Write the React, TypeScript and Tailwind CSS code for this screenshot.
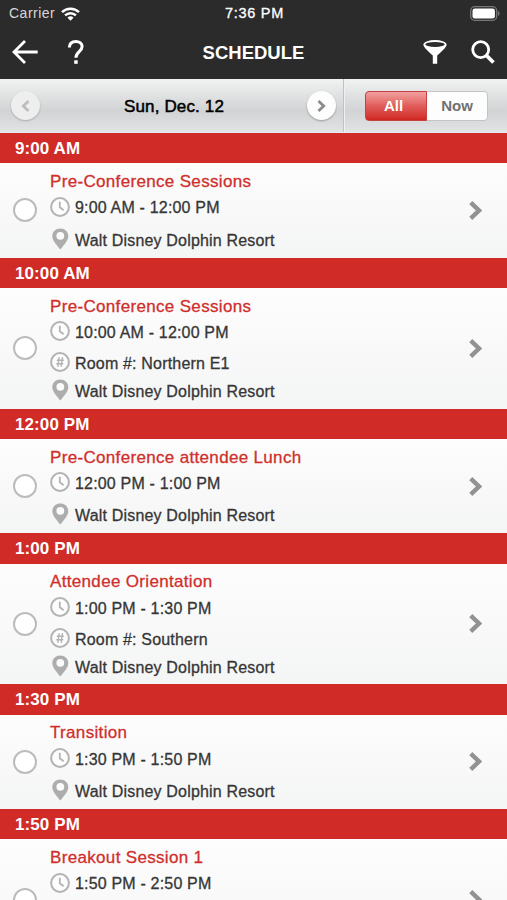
import { useState } from 'react'
import clsx from 'clsx'

type Session = {
  slot: string
  title: string
  time: string
  room?: string
  location?: string
  tall?: boolean
}

const VENUE = 'Walt Disney Dolphin Resort'

const sessions: Session[] = [
  { slot: '9:00 AM', title: 'Pre-Conference Sessions', time: '9:00 AM - 12:00 PM', location: VENUE },
  { slot: '10:00 AM', title: 'Pre-Conference Sessions', time: '10:00 AM - 12:00 PM', room: 'Northern E1', location: VENUE, tall: true },
  { slot: '12:00 PM', title: 'Pre-Conference attendee Lunch', time: '12:00 PM - 1:00 PM', location: VENUE },
  { slot: '1:00 PM', title: 'Attendee Orientation', time: '1:00 PM - 1:30 PM', room: 'Southern', location: VENUE, tall: true },
  { slot: '1:30 PM', title: 'Transition', time: '1:30 PM - 1:50 PM', location: VENUE },
  { slot: '1:50 PM', title: 'Breakout Session 1', time: '1:50 PM - 2:50 PM', tall: true },
]

function ClockIcon() {
  return (
    <svg className="w-5 h-5 -mt-[3px]" viewBox="0 0 20 20" fill="none" stroke="#b3b3b3">
      <circle cx="10" cy="10" r="8.9" strokeWidth="2" fill="#fdfdfd" />
      <path d="M9.8 4.700v5.500l3.800 3" strokeWidth="1.800" />
    </svg>
  )
}

function RoomIcon() {
  return (
    <svg className="w-5 h-5 -mt-[3px]" viewBox="0 0 20 20" fill="none" stroke="#b3b3b3">
      <circle cx="10" cy="10" r="8.9" strokeWidth="2" fill="#fdfdfd" />
      <path d="M9.200 5.200 7.800 14.800M12.500 5.200l-1.400 9.600M6.800 8.200h7M6.300 11.800h7" strokeWidth="1.400" />
    </svg>
  )
}

function PinIcon() {
  return (
    <svg className="w-5 h-[22px] -mt-1" viewBox="0 0 20 22">
      <path
        d="M10.3.5C5.700.5 2.300 3.800 2.300 8.200c0 4.300 4.600 9 8 13.300 3.400-4.300 8-9 8-13.300C18.300 3.800 14.900.5 10.300.5Z"
        fill="#adadad"
      />
      <circle cx="10.300" cy="7.800" r="3.900" fill="#fbfbfb" />
    </svg>
  )
}

function Chevron({ className }: { className: string }) {
  return (
    <svg className={className} viewBox="0 0 12 18" fill="none" stroke="currentColor" strokeWidth="4.200">
      <path d="M1.500 1.600 9.300 9 1.500 16.400" />
    </svg>
  )
}

function StatusBar() {
  return (
    <div className="h-[27px] grid grid-cols-3 items-center pl-[9px] pr-[7px] text-[14px]">
      <div className="flex items-center gap-[6px] text-[#d8d8d8] tracking-[0.500px]">
        Carrier
        <svg className="w-[19px] h-[14px]" viewBox="0 0 19 14" fill="none" stroke="#fff" strokeWidth="2.500">
          <path d="M1 5.100a12.200 12.200 0 0 1 17 0" />
          <path d="M4.100 8.400a7.600 7.600 0 0 1 10.800 0" />
          <path d="M9.500 13.700 6.500 10.700a4.300 4.300 0 0 1 6 0Z" fill="#fff" stroke="none" />
        </svg>
      </div>
      <div className="pt-px text-center text-[14.500px] text-white tracking-[0.700px] [-webkit-text-stroke:0.300px]">7:36 PM</div>
      <svg className="w-[30px] h-[15px] justify-self-end" viewBox="0 0 30 15">
        <rect x=".7" y=".7" width="26" height="13.600" rx="4" fill="none" stroke="#777" strokeWidth="1.300" />
        <rect x="2.500" y="2.500" width="22.400" height="10" rx="2.300" fill="#fff" />
        <path d="M28 5c2 .8 2 4.200 0 5Z" fill="#777" />
      </svg>
    </div>
  )
}

function NavBar() {
  return (
    <div className="h-[52px] grid grid-cols-[1fr_auto_1fr] items-center pl-3 pr-3">
      <div className="flex items-center -mt-[3px]">
        <button type="button" aria-label="Back">
          <svg className="w-[26px] h-[24px]" viewBox="0 0 26 24" fill="none" stroke="#fff" strokeWidth="2.800">
            <path d="M25.700 12H2M13 1 2 12l11 11" />
          </svg>
        </button>
        <button type="button" aria-label="Help" className="ml-[29px]">
          <svg className="w-[18px] h-[26px]" viewBox="0 0 18 26" fill="none" stroke="#fff" strokeWidth="3">
            <path d="M2.400 8.500C2.400 4.400 5 2.400 8.900 2.400c3.700 0 6.200 2.100 6.200 5.200 0 4.900-6.200 5.400-6.200 11.200" />
            <path d="M7.200 21.300h3.500v3.500H7.200Z" fill="#fff" stroke="none" />
          </svg>
        </button>
      </div>
      <h1 className="text-[18.500px] font-bold text-white">SCHEDULE</h1>
      <div className="flex items-center justify-end gap-[24px] -mt-[3px]">
        <button type="button" aria-label="Filter">
          <svg className="w-6 h-6" viewBox="0 0 24 24">
            <path d="M.5 4.500C.5 7.500 6 12 9.800 15.500V23.700h4.400V15.500C18 12 23.500 7.500 23.500 4.500Z" fill="#fff" />
            <ellipse cx="12" cy="4.400" rx="10.600" ry="3.400" fill="#2b2b2b" stroke="#fff" strokeWidth="1.800" />
          </svg>
        </button>
        <button type="button" aria-label="Search">
          <svg className="w-6 h-6" viewBox="0 0 24 24" fill="none" stroke="#fff">
            <circle cx="9.700" cy="9.600" r="8" strokeWidth="2.800" />
            <path d="m15 15 7.500 7.500" strokeWidth="3.800" />
          </svg>
        </button>
      </div>
    </div>
  )
}

function DateBar() {
  const [view, setView] = useState<'all' | 'now'>('all')

  return (
    <div className="h-[54px] flex bg-linear-to-b from-[#f1f2f2] via-[#d1d3d4] via-60% to-[#e2e3e4] border-b border-[#e6edf2]">
      <div className="w-[344px] flex items-center justify-between pl-[11px] pr-[7px] border-r border-[#bfc1c3]">
        <button
          type="button"
          className="w-[29px] h-[29px] rounded-full bg-[#eeeeee] shadow-[0_1px_2px_rgba(0,0,0,0.22)] flex items-center justify-center text-[#bdbdbd]"
        >
          <Chevron className="w-[9px] h-[12px] rotate-180" />
        </button>
        <span className="pt-0.5 pl-px text-[17px] tracking-[0.150px] text-black [-webkit-text-stroke:0.500px]">Sun, Dec. 12</span>
        <button
          type="button"
          className="w-[29px] h-[29px] rounded-full bg-[#fdfdfd] shadow-[0_1px_2px_rgba(0,0,0,0.3)] flex items-center justify-center text-[#8a8a8a]"
        >
          <Chevron className="w-[9px] h-[12px]" />
        </button>
      </div>
      <div className="flex-1 flex items-center justify-center border-l border-[#eef0f1]">
        <div className="flex w-[123px] h-[30px] rounded-[4px] border border-[#c4c4c4] bg-[#fdfdfd] text-[15px] font-bold">
          <button
            type="button"
            onClick={() => setView('all')}
            className={clsx(
              '-m-px w-[62px] pt-0.5 pr-1 rounded-l-[4px]',
              view === 'all' ? 'border border-[#c7423f] bg-linear-to-b from-[#f0a0a0] via-[#e05c5a] to-[#d02420] text-white' : 'text-[#777]',
            )}
          >
            All
          </button>
          <button
            type="button"
            onClick={() => setView('now')}
            className={clsx(
              'flex-1 pt-0.5 pl-0.5',
              view === 'now' ? 'bg-linear-to-b from-[#f0a0a0] to-[#d02420] text-white' : 'text-[#707070]',
            )}
          >
            Now
          </button>
        </div>
      </div>
    </div>
  )
}

function SessionRow({ session }: { session: Session }) {
  return (
    <section>
      <h2 className="h-[30.330px] flex items-center pt-[1.500px] pl-[15px] bg-[#d02b26] text-white text-[17px] font-bold tracking-[0.100px]">
        {session.slot}
      </h2>
      <div
        className={clsx(
          'flex items-center pl-[13px] pr-[25px] bg-linear-to-b from-[#fdfdfd] via-[#f9f9f9] to-[#f4f5f5]',
          session.tall ? 'h-[120.670px]' : 'h-[94.330px]',
        )}
      >
        <button type="button" aria-label="Add to my schedule" className="w-6 h-6 rounded-full border-2 border-[#bcbcbc] bg-white" />
        <div className="flex-1 self-stretch pt-[8.500px] pl-[13px] text-[16px] text-[#363636] tracking-[0.180px] [-webkit-text-stroke:0.300px]">
          <h3 className="h-5 flex items-center text-[17px] tracking-[0.330px] text-[#d02f2b]">{session.title}</h3>
          <div className="h-[33px] flex items-center gap-[5px]">
            <ClockIcon />
            {session.time}
          </div>
          {session.room && (
            <div className="h-[29px] flex items-center gap-[5px]">
              <RoomIcon />
              Room #: {session.room}
            </div>
          )}
          {session.location && (
            <div className={clsx('flex items-center gap-[5px]', session.tall ? 'h-[27px]' : 'h-8')}>
              <PinIcon />
              {session.location}
            </div>
          )}
        </div>
        <Chevron className="w-[13px] h-[19px] text-[#929292]" />
      </div>
    </section>
  )
}

export default function App() {
  return (
    <div className="w-[507px] h-[900px] overflow-hidden bg-[#f7f7f7] font-['Liberation_Sans',Arial,sans-serif]">
      <header className="bg-[#2b2b2b]">
        <StatusBar />
        <NavBar />
      </header>
      <DateBar />
      <main>
        {sessions.map((s) => (
          <SessionRow key={s.slot} session={s} />
        ))}
      </main>
    </div>
  )
}
